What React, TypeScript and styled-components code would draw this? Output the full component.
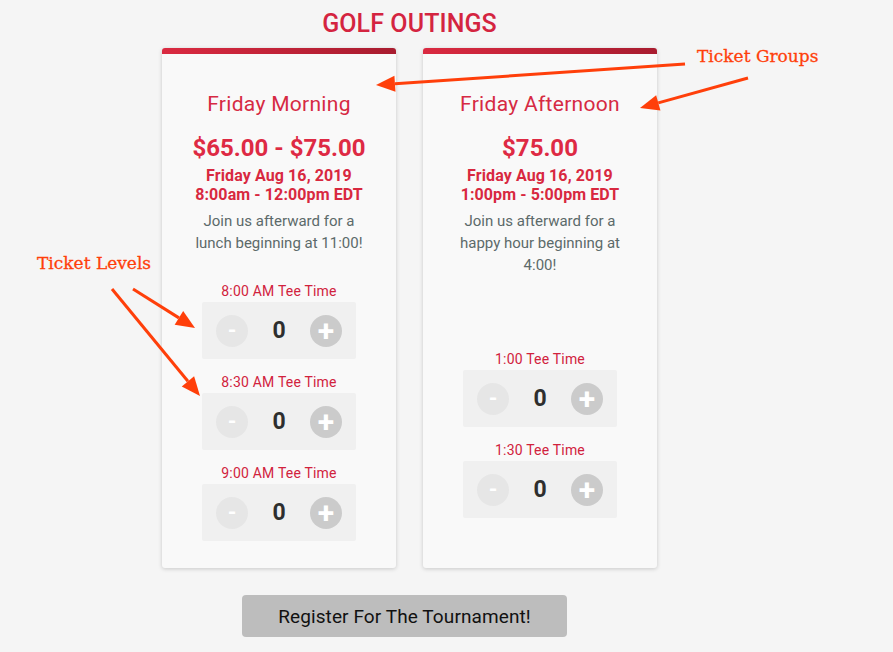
import React from 'react';
import styled, { createGlobalStyle } from 'styled-components';

const GlobalStyle = createGlobalStyle`
  html, body {
    margin: 0;
    padding: 0;
    background: #f5f5f5;
    font-family: Roboto, 'Liberation Sans', sans-serif;
  }
`;

const Page = styled.div`
  position: relative;
  width: 893px;
  height: 652px;
  overflow: hidden;
`;

const Main = styled.div`
  width: 495px;
  margin-left: 162px;
  display: flex;
  flex-direction: column;
  align-items: center;
`;

const Title = styled.h1`
  margin: 9px 0 0;
  height: 30px;
  line-height: 30px;
  font-size: 25px;
  font-weight: 500;
  color: #d42440;
  letter-spacing: 0.1px;
`;

const Cards = styled.div`
  margin-top: 9px;
  display: grid;
  grid-template-columns: 234px 234px;
  gap: 27px;
  align-items: stretch;
`;

const Card = styled.div`
  background: #f9f9f9;
  border-radius: 3px;
  box-shadow: 0 1px 4px rgba(0, 0, 0, 0.18);
  display: flex;
  flex-direction: column;
  align-items: center;
  overflow: hidden;
  height: 520px;
`;

const TopBar = styled.div`
  width: 100%;
  height: 6px;
  background: linear-gradient(90deg, #da2a41, #a81c2f);
`;

const Body = styled.div`
  padding: 38px 22px 0;
  display: flex;
  flex-direction: column;
  align-items: center;
  text-align: center;
  width: 100%;
  box-sizing: border-box;
`;

const GroupName = styled.div`
  font-size: 21px;
  line-height: 24px;
  letter-spacing: 0.3px;
  color: #d62a43;
`;

const Price = styled.div`
  margin-top: 18px;
  font-size: 24px;
  line-height: 28px;
  font-weight: 700;
  color: #de2a44;
`;

const Dates = styled.div`
  margin-top: 4px;
  display: flex;
  flex-direction: column;
`;

const DateLine = styled.div`
  font-size: 16px;
  line-height: 19px;
  font-weight: 700;
  letter-spacing: 0.1px;
  color: #d8283f;
`;

const Description = styled.p`
  margin: 6px 0 0;
  font-size: 15px;
  line-height: 22px;
  color: #5c6a6a;
`;

const Levels = styled.div<{ $top: number }>`
  margin-top: ${(p) => p.$top}px;
  display: flex;
  flex-direction: column;
  align-items: center;
  gap: 14px;
`;

const Level = styled.div`
  display: flex;
  flex-direction: column;
  align-items: center;
  gap: 2px;
`;

const LevelLabel = styled.div`
  font-size: 14px;
  line-height: 18px;
  letter-spacing: 0.2px;
  color: #d1223d;
`;

const Counter = styled.div`
  width: 154px;
  height: 57px;
  box-sizing: border-box;
  padding: 0 14px;
  background: #f0f0f0;
  border-radius: 2px;
  display: flex;
  align-items: center;
  justify-content: space-between;
`;

const RoundButton = styled.button<{ $tone: 'light' | 'dark' }>`
  width: 32px;
  height: 32px;
  border-radius: 50%;
  border: none;
  padding: 0;
  background: ${(p) => (p.$tone === 'light' ? '#e6e6e6' : '#cbcbcb')};
  color: #ffffff;
  font-family: Roboto, sans-serif;
  font-size: ${(p) => (p.$tone === 'light' ? '22px' : '30px')};
  font-weight: 700;
  line-height: 32px;
  display: flex;
  align-items: center;
  justify-content: center;
  cursor: pointer;
`;

const Count = styled.span`
  font-size: 23px;
  font-weight: 700;
  color: #2e2e2e;
`;

const RegisterButton = styled.button`
  margin-top: 27px;
  margin-right: 10px;
  width: 325px;
  height: 42px;
  border: none;
  border-radius: 4px;
  background: #bdbdbd;
  color: #111111;
  font-family: Roboto, sans-serif;
  font-size: 19px;
  letter-spacing: 0.1px;
  cursor: pointer;
`;

const Overlay = styled.svg`
  position: absolute;
  left: 0;
  top: 0;
  pointer-events: none;
`;

const Note = styled.div<{ $x: number; $y: number }>`
  position: absolute;
  left: ${(p) => p.$x}px;
  top: ${(p) => p.$y}px;
  font-family: 'DejaVu Serif', 'Liberation Serif', serif;
  font-size: 17px;
  color: #ff3f0a;
  -webkit-text-stroke: 0.3px #ff3f0a;
  white-space: nowrap;
`;

interface TicketLevel {
  label: string;
}

interface TicketGroup {
  name: string;
  price: string;
  date: string;
  time: string;
  description: string;
  levelsTop: number;
  levels: TicketLevel[];
}

const groups: TicketGroup[] = [
  {
    name: 'Friday Morning',
    price: '$65.00 - $75.00',
    date: 'Friday Aug 16, 2019',
    time: '8:00am - 12:00pm EDT',
    description: 'Join us afterward for a lunch beginning at 11:00!',
    levelsTop: 28,
    levels: [{ label: '8:00 AM Tee Time' }, { label: '8:30 AM Tee Time' }, { label: '9:00 AM Tee Time' }],
  },
  {
    name: 'Friday Afternoon',
    price: '$75.00',
    date: 'Friday Aug 16, 2019',
    time: '1:00pm - 5:00pm EDT',
    description: 'Join us afterward for a happy hour beginning at 4:00!',
    levelsTop: 74,
    levels: [{ label: '1:00 Tee Time' }, { label: '1:30 Tee Time' }],
  },
];

// arrow from (x1,y1) with its head at (x2,y2)
const Arrow: React.FC<{ x1: number; y1: number; x2: number; y2: number }> = ({ x1, y1, x2, y2 }) => {
  const a = Math.atan2(y2 - y1, x2 - x1);
  const len = 19;
  const w = 8;
  const bx = x2 - len * Math.cos(a);
  const by = y2 - len * Math.sin(a);
  const px = -Math.sin(a) * w;
  const py = Math.cos(a) * w;
  return (
    <g>
      <line x1={x1} y1={y1} x2={bx} y2={by} stroke="#ff3f0a" strokeWidth={3} />
      <polygon points={`${x2},${y2} ${bx + px},${by + py} ${bx - px},${by - py}`} fill="#ff3f0a" />
    </g>
  );
};

export default function App() {
  return (
    <Page>
      <GlobalStyle />
      <Main>
        <Title>GOLF OUTINGS</Title>
        <Cards>
          {groups.map((g) => (
            <Card key={g.name}>
              <TopBar />
              <Body>
                <GroupName>{g.name}</GroupName>
                <Price>{g.price}</Price>
                <Dates>
                  <DateLine>{g.date}</DateLine>
                  <DateLine>{g.time}</DateLine>
                </Dates>
                <Description>{g.description}</Description>
                <Levels $top={g.levelsTop}>
                  {g.levels.map((l) => (
                    <Level key={l.label}>
                      <LevelLabel>{l.label}</LevelLabel>
                      <Counter>
                        <RoundButton $tone="light">-</RoundButton>
                        <Count>0</Count>
                        <RoundButton $tone="dark">+</RoundButton>
                      </Counter>
                    </Level>
                  ))}
                </Levels>
              </Body>
            </Card>
          ))}
        </Cards>
        <RegisterButton>Register For The Tournament!</RegisterButton>
      </Main>

      <Overlay width={893} height={652}>
        <Arrow x1={685} y1={64} x2={376} y2={85} />
        <Arrow x1={748} y1={78} x2={640} y2={108} />
        <Arrow x1={133} y1={289} x2={195} y2={328} />
        <Arrow x1={112} y1={289} x2={200} y2={396} />
      </Overlay>
      <Note $x={697} $y={46}>Ticket Groups</Note>
      <Note $x={37} $y={253}>Ticket Levels</Note>
    </Page>
  );
}
